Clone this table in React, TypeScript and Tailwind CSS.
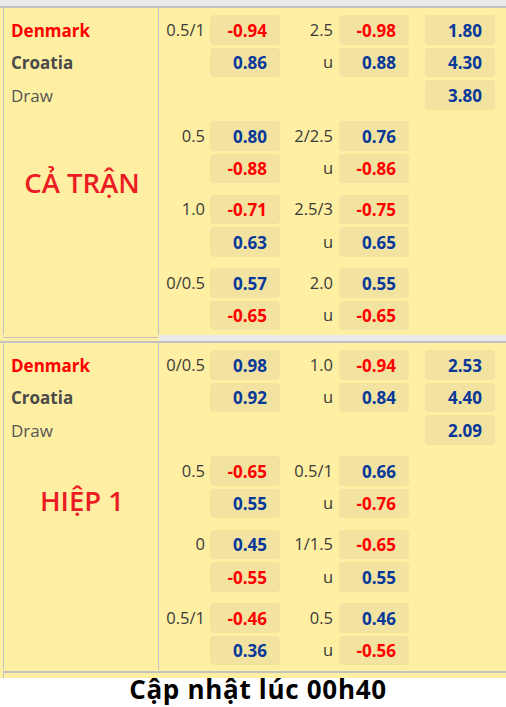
import React from "react";

type Cell = { l1?: string; v1?: string; l2?: string; v2?: string; v3?: string };

const FONT = { fontFamily: '"Open Sans", "Noto Sans", Arial, sans-serif' };

function Val({ v }: { v?: string }) {
  if (!v) return <div className="w-[70px]" />;
  const red = v.startsWith("-");
  return (
    <div
      className={`w-[70px] h-full rounded-[4px] bg-[#F3E3A0] flex items-center justify-end pr-[13px] pt-[1px] text-[17px] font-bold ${
        red ? "text-[#FF0000]" : "text-[#08389A]"
      }`}
    >
      {v}
    </div>
  );
}

function Row({ c }: { c: Cell }) {
  return (
    <div className="flex h-[29.5px] items-stretch">
      <div className="w-[51px] pr-[5px] pt-[1px] flex items-center justify-end text-[16.5px] text-[#3a3a3a]">{c.l1}</div>
      <Val v={c.v1} />
      <div className="w-[59px] pr-[6px] pt-[1px] flex items-center justify-end text-[16.5px] text-[#3a3a3a]">{c.l2}</div>
      <Val v={c.v2} />
      <div className="w-[16px]" />
      <Val v={c.v3} />
    </div>
  );
}

function Section({
  first,
  label,
  groups,
}: {
  first: boolean;
  label: string;
  groups: Cell[][];
}) {
  return (
    <div className="flex flex-col">
      {first ? (
        <div className="h-[8px] flex flex-col">
          <div className="h-[6px] bg-[#EAEAEA]" />
          <div className="h-[2px] bg-[#C2C2C2]" />
        </div>
      ) : (
        <div className="h-[8px] flex flex-col">
          <div className="h-[6px] flex">
            <div className="w-[159px] bg-[#FFEFA3] pt-[2px]">
              <div className="h-px bg-[#C2C2C2] ml-[3px] mr-[1px]" />
            </div>
            <div className="flex-1 bg-[#EAEAEA]" />
          </div>
          <div className="h-[2px] bg-[#C2C2C2]" />
        </div>
      )}
      <div className="flex">
        <div className="ml-[3px] w-[156px] border-l border-r border-[#C2C2C2] pt-[7px] flex flex-col gap-[3px]">
          <div className="h-[29.5px] pt-[1px] flex items-center pl-[7px] text-[17px] font-bold text-[#FF0000]">Denmark</div>
          <div className="h-[29.5px] pt-[1px] flex items-center pl-[7px] text-[17px] font-bold text-[#4A4A4A]">Croatia</div>
          <div className="h-[29.5px] pt-[1px] flex items-center pl-[7px] text-[17px] text-[#555555]">Draw</div>
          {first ? (
            <div className="mt-[55px] h-[30px] flex items-center justify-center pl-[2px] text-[27.5px] font-semibold text-[#EC1C24] leading-none">
              {label}
            </div>
          ) : (
            <div className="mt-[38px] h-[30px] flex items-center justify-center pl-[2px] text-[27.5px] font-semibold text-[#EC1C24] leading-none">
              {label}
            </div>
          )}
        </div>
        <div className="flex-1 pt-[7px] pb-[5px] flex flex-col gap-[11.5px]">
          {groups.map((g, i) => (
            <div key={i} className="flex flex-col gap-[3px]">
              {g.map((c, j) => (
                <Row key={j} c={c} />
              ))}
            </div>
          ))}
        </div>
      </div>
    </div>
  );
}

const s1: Cell[][] = [
  [
    { l1: "0.5/1", v1: "-0.94", l2: "2.5", v2: "-0.98", v3: "1.80" },
    { v1: "0.86", l2: "u", v2: "0.88", v3: "4.30" },
    { v3: "3.80" },
  ],
  [
    { l1: "0.5", v1: "0.80", l2: "2/2.5", v2: "0.76" },
    { v1: "-0.88", l2: "u", v2: "-0.86" },
  ],
  [
    { l1: "1.0", v1: "-0.71", l2: "2.5/3", v2: "-0.75" },
    { v1: "0.63", l2: "u", v2: "0.65" },
  ],
  [
    { l1: "0/0.5", v1: "0.57", l2: "2.0", v2: "0.55" },
    { v1: "-0.65", l2: "u", v2: "-0.65" },
  ],
];

const s2: Cell[][] = [
  [
    { l1: "0/0.5", v1: "0.98", l2: "1.0", v2: "-0.94", v3: "2.53" },
    { v1: "0.92", l2: "u", v2: "0.84", v3: "4.40" },
    { v3: "2.09" },
  ],
  [
    { l1: "0.5", v1: "-0.65", l2: "0.5/1", v2: "0.66" },
    { v1: "0.55", l2: "u", v2: "-0.76" },
  ],
  [
    { l1: "0", v1: "0.45", l2: "1/1.5", v2: "-0.65" },
    { v1: "-0.55", l2: "u", v2: "0.55" },
  ],
  [
    { l1: "0.5/1", v1: "-0.46", l2: "0.5", v2: "0.46" },
    { v1: "0.36", l2: "u", v2: "-0.56" },
  ],
];

export default function App() {
  return (
    <div className="w-[506px] h-[707px] bg-white overflow-hidden" style={FONT}>
      <div className="bg-[#FFEFA3]">
        <Section first label="CẢ TRẬN" groups={s1} />
        <Section first={false} label="HIỆP 1" groups={s2} />
        <div className="h-px" />
        <div className="h-[2px] bg-[#C2C2C2] ml-[3px]" />
        <div className="h-[5px] ml-[3px] border-l border-[#C2C2C2]" />
      </div>
      <div className="h-[28px] flex items-start justify-center pl-[10px]">
        <div className="-mt-[2px] text-[26px] font-bold text-black leading-none tracking-[0.7px]">
          Cập nhật lúc 00h40
        </div>
      </div>
    </div>
  );
}
